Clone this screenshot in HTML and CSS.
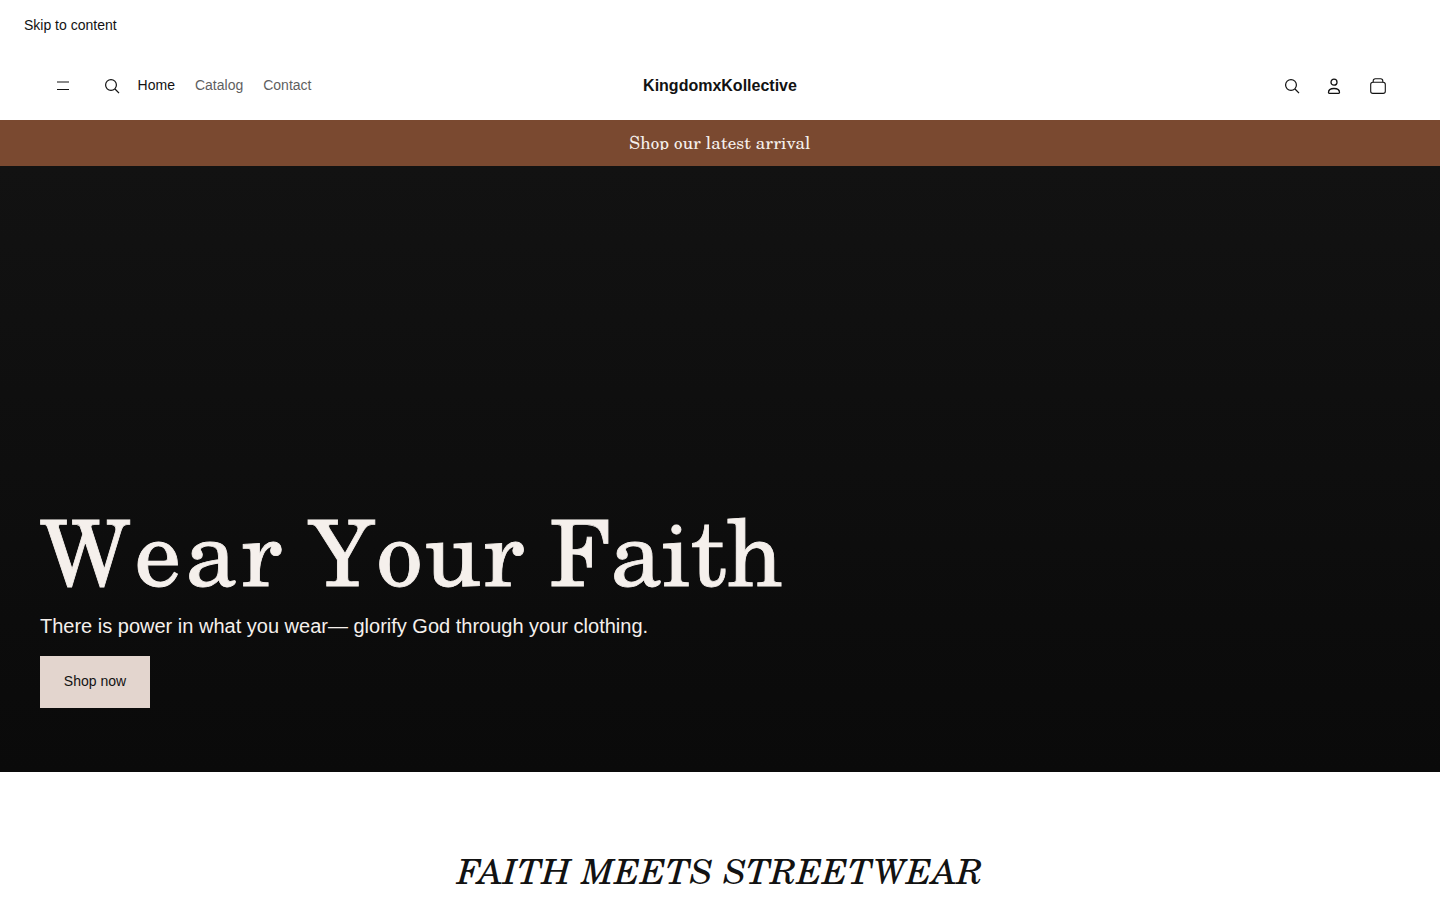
FILE: index.html
```html
<!DOCTYPE html>
<html lang="en">
<head>
<meta charset="utf-8">
<title>KingdomxKollective</title>
<link rel="stylesheet" href="styles.css">
</head>
<body>
<a class="skip" href="#main">Skip to content</a>
<header class="header">
  <div class="header-left">
    <button class="icon-btn menu" aria-label="Menu">
      <svg width="14" height="10" viewBox="0 0 14 10" fill="none" stroke="#121212" stroke-width="1"><path d="M1 1h12M1 8.500h12"/></svg>
    </button>
    <button class="icon-btn search" aria-label="Search">
      <svg width="16" height="16" viewBox="0 0 16 16" fill="none" stroke="#121212" stroke-width="1.2"><circle cx="7" cy="7" r="5.400"/><path d="M11 11l4 4.200"/></svg>
    </button>
    <nav class="nav">
      <a class="nav-link active" href="#">Home</a>
      <a class="nav-link" href="#">Catalog</a>
      <a class="nav-link" href="#">Contact</a>
    </nav>
  </div>
  <a class="logo" href="#">KingdomxKollective</a>
  <div class="header-right">
    <svg class="r-search" width="16" height="16" viewBox="0 0 16 16" fill="none" stroke="#121212" stroke-width="1.2"><circle cx="7" cy="7" r="5.400"/><path d="M11 11l4 4.200"/></svg>
    <svg class="r-user" width="14" height="16" viewBox="0 0 14 16" fill="none" stroke="#121212" stroke-width="1.300"><circle cx="7" cy="4.200" r="3"/><path d="M1.500 14.500c0-3 2.500-4 5.500-4s5.500 1 5.500 4c0 .5-.3.8-.8.8H2.300c-.5 0-.8-.3-.8-.8z"/></svg>
    <svg class="r-bag" width="16" height="16" viewBox="0 0 16 16" fill="none" stroke="#121212" stroke-width="1.100"><rect x=".7" y="4.200" width="14.600" height="11.200" rx="2.200"/><path d="M3.200 4.200V3c0-1.300.9-2.300 2.200-2.300h5.200c1.300 0 2.200 1 2.200 2.300v1.200"/></svg>
  </div>
</header>
<div class="announce"><span class="announce-text">Shop our latest arrival</span></div>
<main id="main">
  <section class="hero">
    <h1 class="hero-title"><span class="word-wear">Wear</span> <span class="word-your">Your</span> Faith</h1>
    <p class="hero-sub">There is power in what you wear— glorify God through your clothing.</p>
    <a class="hero-btn" href="#">Shop now</a>
  </section>
  <section class="intro">
    <h2 class="intro-title">FAITH MEETS STREETWEAR</h2>
  </section>
</main>
</body>
</html>
```

FILE: styles.css
```css
* { box-sizing: border-box; }
html, body { margin: 0; padding: 0; }
body {
  font-family: "Liberation Sans", Arial, sans-serif;
  color: #121212;
  background: #fff;
  height: 900px;
  overflow: hidden;
}
a { color: inherit; text-decoration: none; }
button { background: none; border: 0; padding: 0; display: flex; }
.skip {
  display: block;
  height: 50px;
  padding: 16px 24px 0;
  font-size: 14px;
  line-height: 18px;
}
.header {
  height: 70px;
  padding: 1px 54px 0;
  display: grid;
  grid-template-columns: 1fr auto 1fr;
  align-items: center;
}
.header-left { display: flex; align-items: center; padding-left: 2px; }
.menu { margin-right: 34px; }
.search { margin-right: 17.6px; }
.nav { display: flex; gap: 20px; margin-bottom: 1px; }
.nav-link { font-size: 14px; line-height: 18px; color: #5f5f5f; }
.nav-link.active { color: #121212; }
.logo { font-size: 16px; font-weight: 700; line-height: 20px; }
.header-right { display: flex; align-items: center; justify-content: flex-end; }
.r-search { margin-right: 27px; }
.r-user { margin-right: 29px; }
.announce {
  height: 46px;
  padding-top: 12px;
  background: #7a4930;
  color: #f5f0ec;
  text-align: center;
  font-family: "TeX Gyre Schola", "DejaVu Serif", serif;
  font-size: 17px;
  letter-spacing: .008em;
}
.announce-text {
  display: block;
  height: 18px;
  line-height: 22px;
  overflow: hidden;
}
.hero {
  height: 606px;
  background: linear-gradient(#121212, #0a0a0a);
  padding: 0 40px 64px;
  display: flex;
  flex-direction: column;
  justify-content: flex-end;
  align-items: flex-start;
}
.hero-title {
  margin: 0 0 6px;
  font-family: "TeX Gyre Schola", "DejaVu Serif", serif;
  font-kerning: none;
  font-weight: 400;
  font-size: 92px;
  line-height: 116px;
  word-spacing: -3px;
  -webkit-text-stroke: .8px #f5f0ec;
  color: #f5f0ec;
}
.word-wear { letter-spacing: 4.6px; }
.word-your { letter-spacing: 2.4px; }
.hero-sub {
  margin: 0 0 18px;
  font-size: 20px;
  line-height: 24px;
  color: #f5f0ec;
}
.hero-btn {
  width: 110px;
  height: 52px;
  padding-bottom: 2px;
  display: flex;
  align-items: center;
  justify-content: center;
  background: #e3d5ce;
  font-size: 14px;
}
.intro { padding-top: 75px; text-align: center; }
.intro-title {
  margin: 0;
  font-family: "TeX Gyre Schola", "DejaVu Serif", serif;
  font-style: italic;
  font-weight: 400;
  font-size: 35.2px;
  line-height: 46px;
  letter-spacing: .005em;
}
```
